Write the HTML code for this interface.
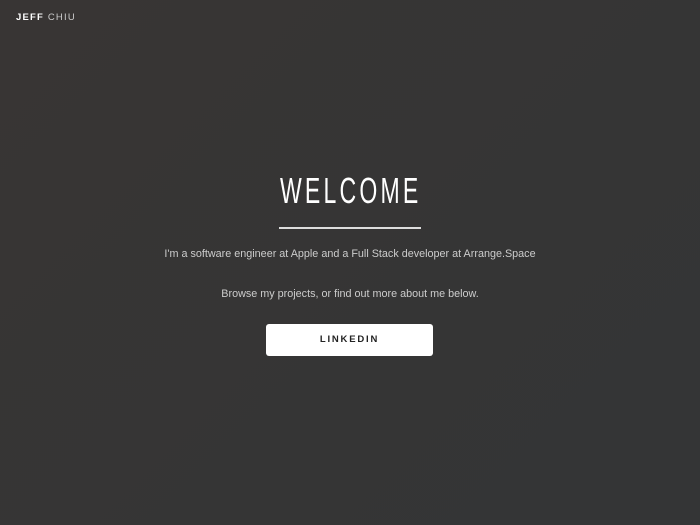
<!DOCTYPE html>
<html><head><style>
html,body{margin:0;padding:0}
body{width:700px;height:525px;background:#363535;background:linear-gradient(135deg,#383534,#353535 60%,#343536);font-family:"Liberation Sans",sans-serif;position:relative;overflow:hidden;color:#eee}
.logo{position:absolute;left:16px;top:12px;font-size:9.5px;letter-spacing:1.2px;color:#fff}
.logo b{font-weight:bold}
.logo span{color:#ccc}
h1{position:absolute;left:0;width:700px;top:170px;margin:0;text-align:center;font-weight:normal;font-size:36px;letter-spacing:5px;color:#fff;transform:scaleX(0.64);transform-origin:352px 0}
.rule{position:absolute;left:279px;top:227px;width:142px;height:2px;background:#ddd}
p{position:absolute;left:0;width:700px;margin:0;text-align:center;font-size:10.8px;color:#ccc}
.btn{position:absolute;left:266px;top:324px;width:167px;height:32px;background:#fff;border-radius:3px;color:#222;font-size:9.5px;font-weight:bold;letter-spacing:1.8px;text-align:center;line-height:32px}
</style></head><body>
<div class="logo"><b>JEFF</b> <span>CHIU</span></div>
<h1>WELCOME</h1>
<div class="rule"></div>
<p style="top:248px">I'm a software engineer at Apple and a Full Stack developer at Arrange.Space</p>
<p style="top:288px">Browse my projects, or find out more about me below.</p>
<div class="btn">LINKEDIN</div>
</body></html>
